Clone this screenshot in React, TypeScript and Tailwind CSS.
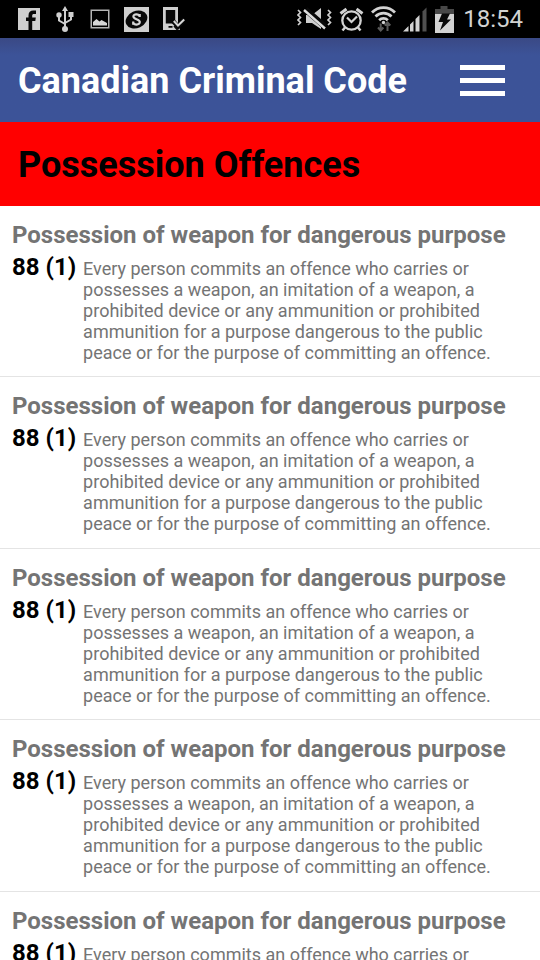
import React from "react";

type Offence = { title: string; section: string; text: string };

const offences: Offence[] = Array.from({ length: 5 }, () => ({
  title: "Possession of weapon for dangerous purpose",
  section: "88 (1)",
  text: "Every person commits an offence who carries or possesses a weapon, an imitation of a weapon, a prohibited device or any ammunition or prohibited ammunition for a purpose dangerous to the public peace or for the purpose of committing an offence.",
}));

function FacebookIcon() {
  return (
    <svg width="22" height="24" viewBox="0 0 22 24" aria-hidden="true">
      <path d="M0 1h22v22H0z" fill="#cfcfcf" />
      <path d="M10.500 23v-9H8v-3.400h2.500V8.400c0-3.100 1.800-4.900 4.800-4.900h2.700v3.400h-1.900c-1.500 0-1.900.6-1.900 1.700v2h3.600l-.5 3.400h-3.100v9z" fill="#080808" />
    </svg>
  );
}

function UsbIcon() {
  return (
    <svg width="22" height="26" viewBox="-2 0 22 26" aria-hidden="true" fill="#cfcfcf" stroke="#cfcfcf">
      <path d="M9 22V4M9 18l-6-3.500V9M9 17l6-3.500V8" fill="none" strokeWidth="2" />
      <path d="M9 0l3 5H6z" stroke="none" />
      <circle cx="9" cy="23" r="3" stroke="none" />
      <circle cx="3" cy="9" r="2.700" stroke="none" />
      <path d="M12.500 6h5v5h-5z" stroke="none" />
    </svg>
  );
}

function PictureIcon() {
  return (
    <svg width="20" height="20" viewBox="0 0 20 20" aria-hidden="true">
      <path d="M1.250 1.250h17.500v17.500H1.250z" fill="none" stroke="#b4b4b4" strokeWidth="1.500" />
      <path d="M3 16.500v-3.500l3.500-3 3 2.500 2-1.500L17 14v2.500z" fill="#d6d6d6" />
    </svg>
  );
}

function SBadgeIcon() {
  return (
    <svg width="25" height="25" viewBox="0 0 25 25" aria-hidden="true">
      <path d="M0 0h25v25H0z" fill="#cfcfcf" />
      <ellipse cx="12.500" cy="12.500" rx="11.300" ry="8.500" transform="rotate(-25 12.500 12.500)" fill="#080808" />
      <path d="M15.700 10V7M15.700 9.500C15 7 9.400 6.500 9.400 9.500c0 3.200 6.400 2.200 6.400 5.600 0 3.400-6 3-6.600.3M9.200 14.500v3.300" fill="none" stroke="#d6d6d6" strokeWidth="2.200" />
    </svg>
  );
}

function DeviceCheckIcon() {
  return (
    <svg width="22" height="24" viewBox="0 0 22 24" aria-hidden="true">
      <path d="M0 0h15v17l2 6H0z" fill="#cfcfcf" />
      <path d="M2.800 3h9.400v13.500H2.800zM5.500 19h4v1.700h-4z" fill="#080808" />
      <path d="M9.500 13.500l5.500 6 6.500-7.500" fill="none" stroke="#080808" strokeWidth="4.500" />
      <path d="M11 19l3.500 4" stroke="#080808" strokeWidth="1.500" />
      <path d="M10.800 14l4.200 4.500 6.200-6" fill="none" stroke="#d6d6d6" strokeWidth="2" />
    </svg>
  );
}

function MuteIcon() {
  return (
    <svg width="35" height="24" viewBox="0 0 35 24" aria-hidden="true">
      <path d="M9 8h6l9-7v21l-9-6H9z" fill="#cfcfcf" />
      <path d="M8.500 2.500L28 19.500" stroke="#080808" strokeWidth="6" />
      <path d="M7 3l21 18.500" stroke="#dcdcdc" strokeWidth="2.400" />
      <path d="M1 3l2.500 2.500L1 8l2.500 2.500L1 13l2.500 2.500L1 18M31 3l2.500 2.500L31 8l2.500 2.500L31 13l2.500 2.500L31 18" fill="none" stroke="#cfcfcf" strokeWidth="1.700" />
    </svg>
  );
}

function AlarmIcon() {
  return (
    <svg width="25" height="25" viewBox="0 0 25 25" aria-hidden="true" fill="none" stroke="#d2d2d2">
      <circle cx="12.500" cy="13.500" r="9.200" strokeWidth="2.300" />
      <path d="M1.500 6.500l6-4.500M23.500 6.500l-6-4.500" strokeWidth="3" />
      <path d="M8 10.500l4.500 4.500L18 9.500" strokeWidth="2.200" />
      <path d="M6 20.500L3.500 23.500M19 20.500l2.500 3" strokeWidth="2.500" />
    </svg>
  );
}

function WifiIcon() {
  return (
    <svg width="25" height="28" viewBox="0 0 25 28" aria-hidden="true" fill="none" stroke="#d2d2d2">
      <path d="M1 7.500c6.500-6.500 16.500-6.500 23 0M4.500 11.500c4.600-4.500 11.400-4.500 16 0M8.200 15.200c2.400-2.400 6.200-2.400 8.600 0" strokeWidth="2.800" />
      <circle cx="12.500" cy="17.500" r="1.700" fill="#d2d2d2" stroke="none" />
      <path d="M9.700 18.500v7M7 22.500l2.700 3 2.700-3M16.500 26v-8M13.700 20.500l2.800-3 2.800 3" stroke="#5a5a5a" strokeWidth="2" />
    </svg>
  );
}

function SignalIcon() {
  return (
    <svg width="25" height="25" viewBox="0 0 25 25" aria-hidden="true" fill="#d2d2d2">
      <path d="M0 24.500l5.500-5.500v5.500zM7 17.500l3.500-3.500v10.500H7zM12.500 12L16.500 8v16.500h-4z" />
      <path d="M19.500 4.500L23.500.5v24h-4z" fill="#505050" />
    </svg>
  );
}

function BatteryIcon() {
  return (
    <svg width="19" height="27" viewBox="0 0 19 27" aria-hidden="true">
      <path d="M5.500 0h7v3H19v5H0V3h5.500z" fill="#484848" />
      <path d="M0 8h19v19H0z" fill="#d2d2d2" />
      <path d="M7 7.500h8l-3 6h4L5 24.500 8 16H3.500z" fill="#080808" />
    </svg>
  );
}

function StatusBar() {
  return (
    <div className="flex h-[38px] shrink-0 items-center justify-between bg-black pr-[17px] pl-[18px]">
      <div className="flex items-center gap-3.5">
        <FacebookIcon />
        <UsbIcon />
        <PictureIcon />
        <SBadgeIcon />
        <DeviceCheckIcon />
      </div>
      <div className="flex items-center gap-[7px]">
        <MuteIcon />
        <AlarmIcon />
        <WifiIcon />
        <SignalIcon />
        <BatteryIcon />
        <time className="ml-0.5 text-2xl leading-none text-[#d2d2d2]">18:54</time>
      </div>
    </div>
  );
}

export default function App() {
  return (
    <div className="flex h-screen flex-col overflow-hidden bg-white font-[Roboto,sans-serif]">
      <StatusBar />
      <header className="flex h-[84px] shrink-0 items-center justify-between bg-[#3c5398] bg-linear-to-b from-[#3a4985] to-[#3c5398] to-20% pr-[35px] pl-[18px]">
        <h1 className="pt-0.5 text-4xl font-bold text-white">Canadian Criminal Code</h1>
        <button type="button" aria-label="Menu" className="flex w-[45px] flex-col gap-2">
          <span className="h-[5px] w-full bg-white" />
          <span className="h-[5px] w-full bg-white" />
          <span className="h-[5px] w-full bg-white" />
        </button>
      </header>
      <h2 className="flex h-[84px] shrink-0 items-center bg-[#ff0000] px-[18px] pt-0.5 text-4xl font-bold text-black">
        Possession Offences
      </h2>
      <ul className="min-h-0 flex-1 overflow-y-auto [scrollbar-width:none]">
        {offences.map((offence, i) => (
          <li key={i} className="min-h-[171px] border-b border-[#e4e4e4] px-3 pt-[13px] even:min-h-[172px]">
            <h3 className="text-2xl leading-8 font-bold text-[#747474]">{offence.title}</h3>
            <div className="flex gap-[7px]">
              <span className="shrink-0 text-2xl leading-8 font-bold text-black">{offence.section}</span>
              <p className="max-w-[410px] pt-[7px] text-lg leading-[21px] text-[#747474]">{offence.text}</p>
            </div>
          </li>
        ))}
      </ul>
    </div>
  );
}
